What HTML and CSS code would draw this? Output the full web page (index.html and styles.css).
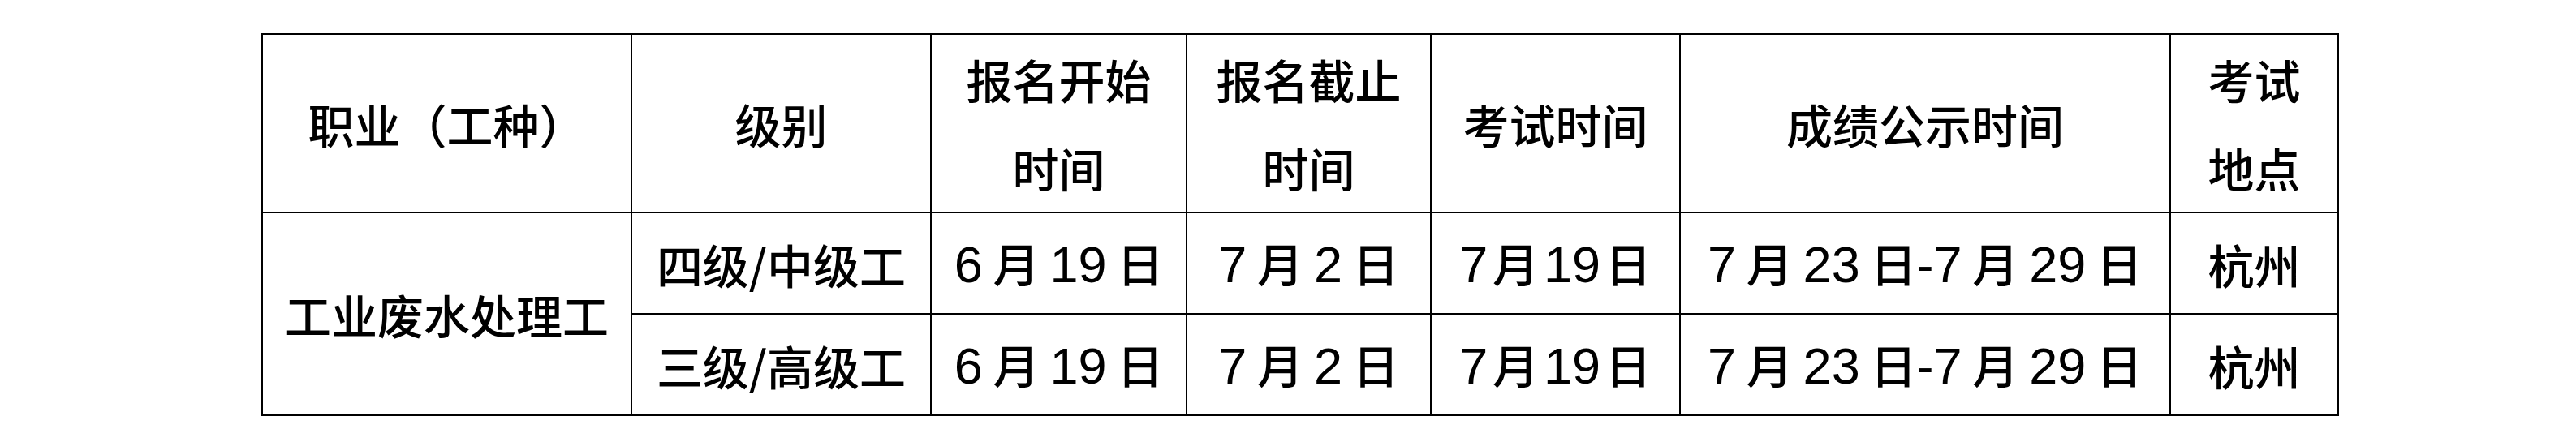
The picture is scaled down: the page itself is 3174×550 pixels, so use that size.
FILE: index.html
```html
<!DOCTYPE html>
<html lang="zh-CN">
<head>
<meta charset="utf-8">
<title>职业技能等级认定时间安排</title>
<link rel="stylesheet" href="styles.css">
</head>
<body>
<div class="page">
  <table class="schedule">
    <colgroup>
      <col class="c1"><col class="c2"><col class="c3"><col class="c4"><col class="c5"><col class="c6"><col class="c7">
    </colgroup>
    <thead>
      <tr class="head-row">
        <th class="shift">职业（工种）</th>
        <th>级别</th>
        <th>报名开始<br>时间</th>
        <th>报名截止<br>时间</th>
        <th>考试时间</th>
        <th>成绩公示时间</th>
        <th>考试<br>地点</th>
      </tr>
    </thead>
    <tbody>
      <tr class="data-row">
        <td rowspan="2">工业废水处理工</td>
        <td>四级/中级工</td>
        <td><span class="n">6</span> 月 <span class="n">19</span> 日</td>
        <td><span class="n">7</span> 月 <span class="n">2</span> 日</td>
        <td class="tight"><span class="n">7</span> 月 <span class="n">19</span> 日</td>
        <td><span class="n">7</span> 月 <span class="n">23</span> 日<span class="n">-7</span> 月 <span class="n">29</span> 日</td>
        <td>杭州</td>
      </tr>
      <tr class="data-row">
        <td>三级/高级工</td>
        <td><span class="n">6</span> 月 <span class="n">19</span> 日</td>
        <td><span class="n">7</span> 月 <span class="n">2</span> 日</td>
        <td class="tight"><span class="n">7</span> 月 <span class="n">19</span> 日</td>
        <td><span class="n">7</span> 月 <span class="n">23</span> 日<span class="n">-7</span> 月 <span class="n">29</span> 日</td>
        <td>杭州</td>
      </tr>
    </tbody>
  </table>
</div>
</body>
</html>
```

FILE: styles.css
```css
html, body {
  margin: 0;
  padding: 0;
  background: #ffffff;
}

.page {
  padding: 41px 0 0 322px;
}

.schedule {
  border-collapse: collapse;
  table-layout: fixed;
  width: 2558px;
  color: #000000;
  font-family: "Noto Sans CJK SC", "Liberation Sans", sans-serif;
  font-size: 57px;
  border: 2px solid #000000;
}

.c1 { width: 455px; }
.c2 { width: 369px; }
.c3 { width: 315px; }
.c4 { width: 301px; }
.c5 { width: 307px; }
.c6 { width: 604px; }
.c7 { width: 207px; }

.schedule th,
.schedule td {
  border: 2px solid #000000;
  padding: 0;
  text-align: center;
  vertical-align: middle;
  font-weight: 500;
  white-space: nowrap;
}

.head-row {
  height: 215px;
}

.head-row th {
  line-height: 109px;
}

.data-row {
  height: 125px;
}

.data-row td {
  line-height: 60px;
}

.shift {
  padding-right: 22px;
}

.tight {
  word-spacing: -7px;
}

.n {
  font-family: "Liberation Sans", sans-serif;
  font-size: 63px;
  font-weight: 400;
}
```
